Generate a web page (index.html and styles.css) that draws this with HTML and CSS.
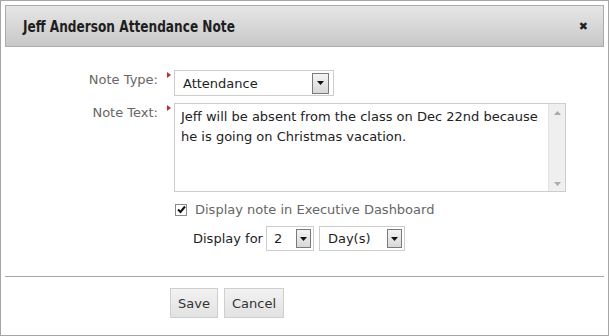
FILE: index.html
```html
<!DOCTYPE html>
<html>
<head>
<meta charset="utf-8">
<link rel="stylesheet" href="styles.css">
</head>
<body>
<div class="dialog">
  <div class="header">
    <h1 class="title">Jeff Anderson Attendance Note</h1>
    <span class="close">&#x2716;</span>
  </div>
  <div class="form">
    <div class="row">
      <label class="label">Note Type:</label>
      <span class="req"></span>
      <div class="select sel-type">
        <span class="sel-text">Attendance</span>
        <span class="sel-btn"><svg width="7" height="4" viewBox="0 0 7 4"><path d="M0 0H7L3.5 4Z" fill="#111"/></svg></span>
      </div>
    </div>
    <div class="row row-text">
      <label class="label">Note Text:</label>
      <span class="req"></span>
      <div class="textarea">
        <div class="ta-text">Jeff will be absent from the class on Dec 22nd because he is going on Christmas vacation.</div>
        <div class="scroll">
          <svg width="7" height="4" viewBox="0 0 7 4"><path d="M0 4H7L3.5 0Z" fill="#aaa"/></svg>
          <svg width="7" height="4" viewBox="0 0 7 4"><path d="M0 0H7L3.5 4Z" fill="#aaa"/></svg>
        </div>
      </div>
    </div>
    <div class="check-row">
      <span class="checkbox"><svg width="9" height="9" viewBox="0 0 9 9"><path d="M1 4.5L3.5 7L8 1.5" fill="none" stroke="#111" stroke-width="2"/></svg></span>
      <span class="check-label">Display note in Executive Dashboard</span>
    </div>
    <div class="display-row">
      <span class="disp-label">Display for</span>
      <div class="select sel-num">
        <span class="sel-text">2</span>
        <span class="sel-btn"><svg width="7" height="4" viewBox="0 0 7 4"><path d="M0 0H7L3.5 4Z" fill="#111"/></svg></span>
      </div>
      <div class="select sel-unit">
        <span class="sel-text">Day(s)</span>
        <span class="sel-btn"><svg width="7" height="4" viewBox="0 0 7 4"><path d="M0 0H7L3.5 4Z" fill="#111"/></svg></span>
      </div>
    </div>
  </div>
  <div class="footer">
    <button class="btn btn-save">Save</button>
    <button class="btn btn-cancel">Cancel</button>
  </div>
</div>
</body>
</html>
```
FILE: styles.css
```css
* { box-sizing: border-box; }
html, body { margin: 0; padding: 0; background: #fff; }
body {
  font-family: "DejaVu Sans", sans-serif;
  font-size: 13px;
  color: #222;
}
.dialog {
  width: 609px;
  height: 336px;
  border: 1px solid #a6a6a6;
  padding: 4px 4px 0 4px;
  background: #fff;
}
.header {
  height: 42px;
  border: 1px solid #ababab;
  background: linear-gradient(#e6e6e6, #c8c8c8);
  display: flex;
  align-items: center;
  justify-content: space-between;
  padding: 0 15px 0 17px;
}
.title {
  margin: 0;
  font-family: "DejaVu Sans Condensed", "DejaVu Sans", sans-serif;
  font-size: 13.5px;
  font-weight: bold;
  color: #1e1e1e;
  transform: scale(1, 1.18);
}
.close {
  font-size: 11px;
  color: #222;
  font-family: "DejaVu Sans", sans-serif;
}
.form {
  padding-top: 23px;
  height: 229px;
}
.row {
  display: flex;
  align-items: flex-start;
}
.row-text { margin-top: 7px; }
.label {
  width: 153px;
  text-align: right;
  color: #666;
  padding-top: 2px;
  line-height: 16px;
}
.req {
  width: 16px;
  height: 26px;
  position: relative;
}
.req::before {
  content: "";
  position: absolute;
  left: 9px;
  top: 2px;
  border-left: 4px solid #c0302a;
  border-top: 3px solid transparent;
  border-bottom: 3px solid transparent;
}
.select {
  border: 1px solid #cdcdcd;
  display: flex;
  align-items: center;
  justify-content: space-between;
  background: #fff;
}
.sel-type { width: 160px; height: 26px; padding: 0 4px 0 8px; }
.sel-num { width: 48px; height: 25px; padding: 0 2px 0 7px; }
.sel-unit { width: 86px; height: 25px; padding: 0 2px 0 8px; margin-left: 5px; }
.sel-text { color: #1e1e1e; }
.sel-btn {
  width: 17px;
  height: 21px;
  border: 1px solid #7a7a7a;
  background: linear-gradient(#f4f4f4, #d8d8d8);
  display: flex;
  align-items: center;
  justify-content: center;
}
.sel-num .sel-btn, .sel-unit .sel-btn { width: 15px; height: 19px; }
.textarea {
  width: 392px;
  height: 89px;
  border: 1px solid #cdcdcd;
  display: flex;
}
.ta-text {
  flex: 1;
  padding: 3px 4px 3px 6px;
  line-height: 20px;
  color: #222;
}
.scroll {
  flex: 0 0 17px;
  background: #efefef;
  border-left: 1px solid #e2e2e2;
  display: flex;
  flex-direction: column;
  justify-content: space-between;
  align-items: center;
  padding: 7px 0 5px;
}
.check-row {
  display: flex;
  align-items: center;
  margin: 10px 0 0 170px;
}
.checkbox {
  width: 12px;
  height: 12px;
  border: 1px solid #8a8a8a;
  background: #fff;
  display: flex;
  align-items: center;
  justify-content: center;
}
.check-label {
  margin-left: 8px;
  color: #666;
}
.display-row {
  display: flex;
  align-items: center;
  margin: 9px 0 0 188px;
}
.disp-label { margin-right: 3px; color: #1e1e1e; }
.footer {
  border-top: 1px solid #a6a6a6;
  padding: 11px 0 0 165px;
  display: flex;
  gap: 6px;
}
.btn {
  font-family: inherit;
  font-size: 13px;
  color: #333;
  height: 30px;
  border: 1px solid #cfcfcf;
  background: linear-gradient(#f2f2f2, #e2e2e2);
  padding: 0;
}
.btn-save { width: 48px; }
.btn-cancel { width: 60px; }
```
